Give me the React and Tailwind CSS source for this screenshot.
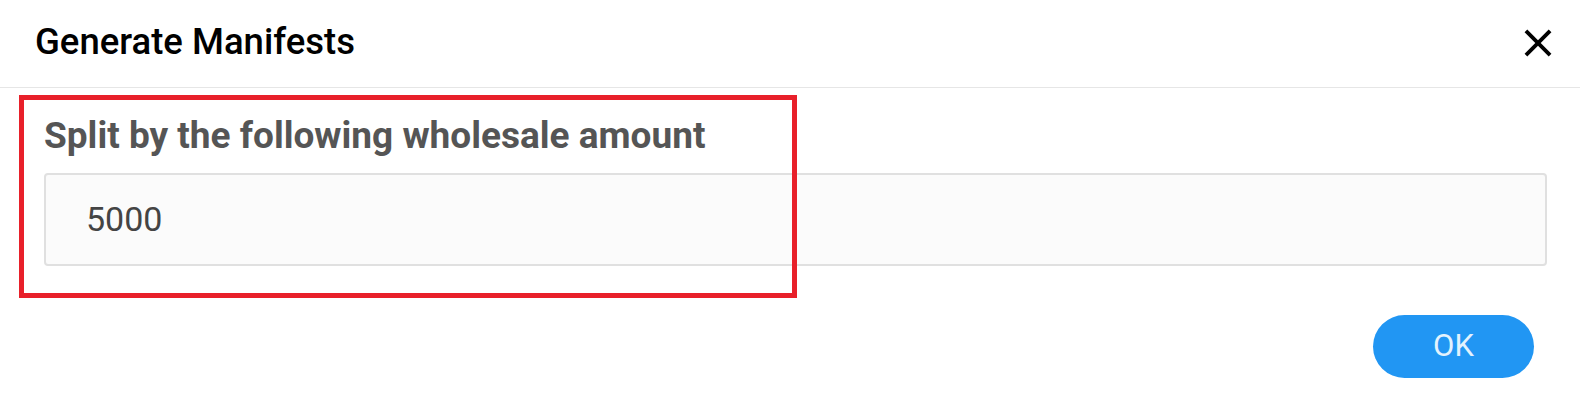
export default function App() {
  return (
    <div className="relative w-[1580px] h-[400px] bg-white font-['Roboto',sans-serif] overflow-hidden">
      <div className="flex items-start justify-between h-[88px] border-b border-[#e6e6e6] pl-[35px] pr-[19px]">
        <h2 className="pt-[24px] text-[36.5px] leading-[36px] font-medium text-black">Generate Manifests</h2>
        <svg className="mt-[20px]" width="46" height="46" viewBox="0 0 24 24" fill="#000">
          <path d="M19 6.41L17.59 5 12 10.59 6.41 5 5 6.41 10.59 12 5 17.59 6.41 19 12 13.41 17.59 19 19 17.59 13.41 12z" />
        </svg>
      </div>
      <div className="pl-[44px] pr-[33px] pt-[30px]">
        <div className="text-[37px] leading-[36px] font-bold text-[#555555]">Split by the following wholesale amount</div>
        <div className="mt-[19px] h-[93px] border-2 border-[#e0e0e0] rounded-[4px] bg-[#fbfbfb] flex items-center pl-[40px] text-[34px] text-[#444444]">
          5000
        </div>
      </div>
      <div className="flex justify-end pr-[46px] mt-[49px]">
        <button className="w-[161px] h-[63px] rounded-full bg-[#2196f3] text-[#e3f2fd] text-[31px] font-normal flex items-center justify-center">
          OK
        </button>
      </div>
      <div className="absolute left-[19px] top-[95px] w-[778px] h-[203px] border-[5px] border-[#e8202a] pointer-events-none"></div>
    </div>
  );
}
